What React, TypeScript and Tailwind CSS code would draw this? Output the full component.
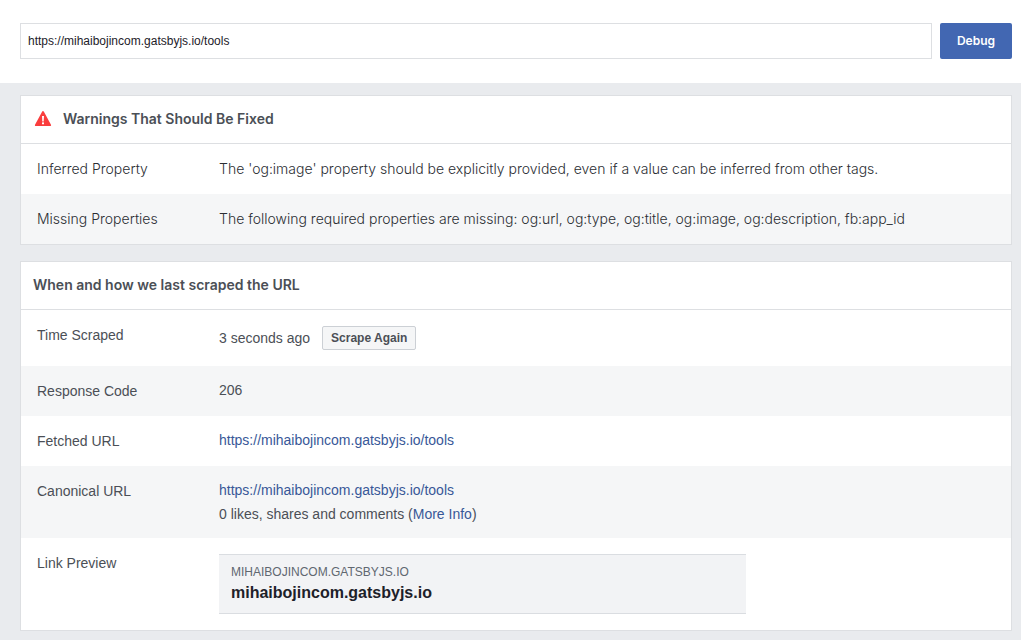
import type { ReactNode } from 'react';

const PAGE_URL = 'https://mihaibojincom.gatsbyjs.io/tools';

const warnings = [
  {
    label: 'Inferred Property',
    text: "The 'og:image' property should be explicitly provided, even if a value can be inferred from other tags.",
  },
  {
    label: 'Missing Properties',
    text: 'The following required properties are missing: og:url, og:type, og:title, og:image, og:description, fb:app_id',
  },
];

function WarningIcon() {
  return (
    <svg className="w-[18px] h-[18px] shrink-0" viewBox="0 0 18 18" aria-hidden="true">
      <path
        d="M9 2 16.200 15.200H1.800Z"
        fill="#fa3e3e"
        stroke="#fa3e3e"
        strokeWidth="1.8"
        strokeLinejoin="round"
      />
      <path d="M8 6h2l-.3 5.400H8.300Z" fill="#fff" />
      <rect x="8" y="12.300" width="2" height="2" rx="0.4" fill="#fff" />
    </svg>
  );
}

function Card({ children }: { children: ReactNode }) {
  return <section className="bg-white border border-[#dddfe2]">{children}</section>;
}

function Row({ label, children }: { label: string; children: ReactNode }) {
  return (
    <tr className="align-top even:bg-[#f5f6f7]">
      <th scope="row" className="w-[182px] p-4 text-left [font-weight:inherit] leading-[18px]">
        {label}
      </th>
      {children}
    </tr>
  );
}

function Link({ href, children }: { href: string; children: ReactNode }) {
  return (
    <a href={href} className="text-[#385898] hover:underline">
      {children}
    </a>
  );
}

export default function App() {
  return (
    <div className="min-h-screen bg-[#e9ebee] font-['Liberation_Sans',Arial,sans-serif] text-sm text-[#4b4f56]">
      {/* URL form */}
      <form
        className="flex gap-2 bg-white pt-[23px] pb-6 pl-5 pr-[9px]"
        onSubmit={(e) => e.preventDefault()}
      >
        <input
          type="text"
          aria-label="URL"
          defaultValue={PAGE_URL}
          className="h-9 min-w-0 flex-1 border border-[#dddfe2] px-[7px] text-xs text-[#1d2129]"
        />
        <button
          type="submit"
          className="h-9 w-[72px] rounded-xs bg-[#4267b2] font-['Inter',sans-serif] text-xs font-semibold text-white"
        >
          Debug
        </button>
      </form>

      <main className="flex flex-col gap-4 pt-3 pb-[9px] pl-5 pr-[9px]">
        {/* Warnings */}
        <Card>
          <div className="flex h-12 items-center gap-[11px] border-b border-[#dddfe2] pb-0.5 pl-[13px]">
            <WarningIcon />
            <h2 className="font-['Inter',sans-serif] font-semibold">Warnings That Should Be Fixed</h2>
          </div>
          <table className="w-full font-['Inter',sans-serif] font-light text-[#2b2e33]">
            <tbody>
              {warnings.map((w) => (
                <Row key={w.label} label={w.label}>
                  <td className="p-4 leading-[18px]">{w.text}</td>
                </Row>
              ))}
            </tbody>
          </table>
        </Card>

        {/* Scrape details */}
        <Card>
          <div className="flex h-12 items-center border-b border-[#dddfe2] px-3 pb-0.5">
            <h2 className="font-['Inter',sans-serif] font-semibold">
              When and how we last scraped the URL
            </h2>
          </div>
          <table className="w-full font-normal">
            <tbody>
              <Row label="Time Scraped">
                <td className="p-4">
                  <div className="flex items-center gap-3">
                    <span>3 seconds ago</span>
                    <button
                      type="button"
                      className="h-6 rounded-xs border border-[#ccd0d5] bg-[#f5f6f7] px-2 text-xs font-bold"
                    >
                      Scrape Again
                    </button>
                  </div>
                </td>
              </Row>
              <Row label="Response Code">
                <td className="px-4 py-3 leading-6">206</td>
              </Row>
              <Row label="Fetched URL">
                <td className="px-4 py-3 leading-6">
                  <Link href={PAGE_URL}>{PAGE_URL}</Link>
                </td>
              </Row>
              <Row label="Canonical URL">
                <td className="px-4 py-3 leading-6">
                  <Link href={PAGE_URL}>{PAGE_URL}</Link>
                  <p>
                    0 likes, shares and comments (<Link href="#more-info">More Info</Link>)
                  </p>
                </td>
              </Row>
              <Row label="Link Preview">
                <td className="p-4">
                  <div className="flex h-[60px] max-w-[527px] flex-col border-y border-[#dadde1] bg-[#f2f3f5] px-3 pt-[9px]">
                    <span className="text-xs uppercase text-[#606770]">mihaibojincom.gatsbyjs.io</span>
                    <strong className="text-base leading-[26px] text-[#1d2129]">
                      mihaibojincom.gatsbyjs.io
                    </strong>
                  </div>
                </td>
              </Row>
            </tbody>
          </table>
        </Card>
      </main>
    </div>
  );
}
